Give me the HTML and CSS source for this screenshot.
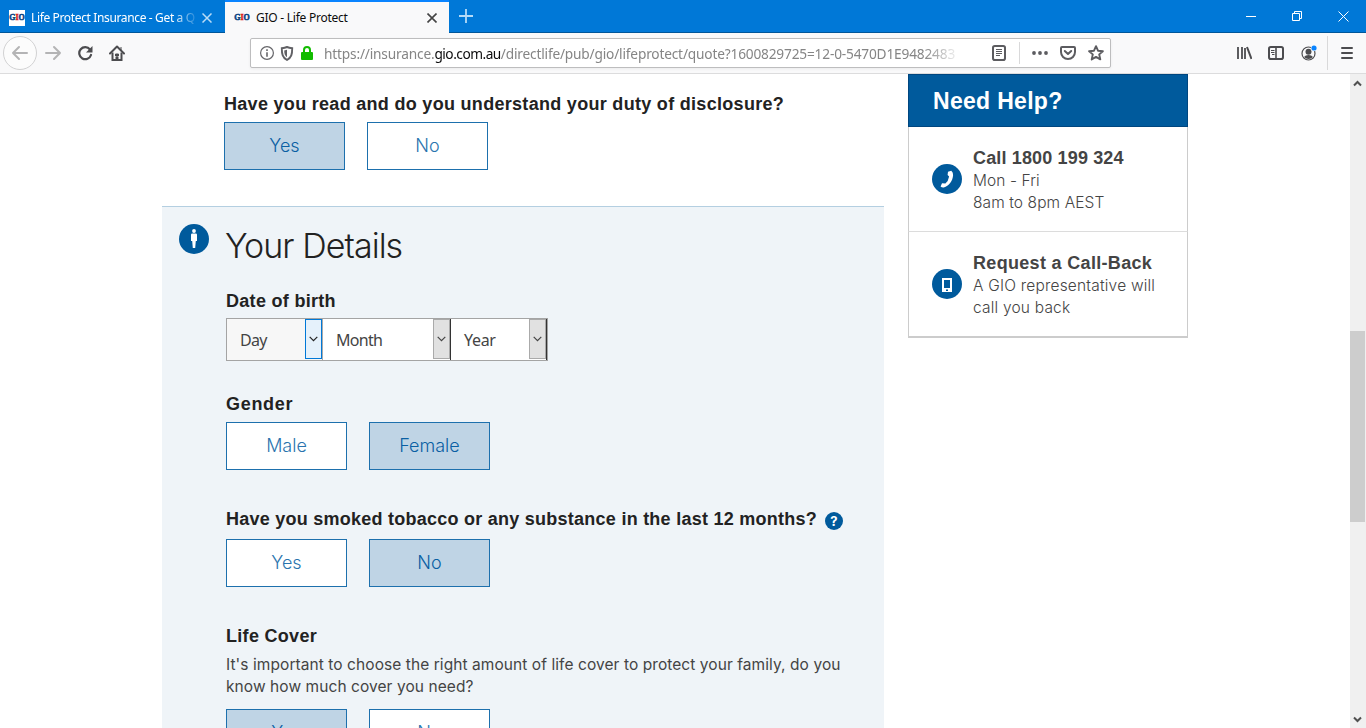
FILE: index.html
```html
<!DOCTYPE html>
<html lang="en">
<head>
<meta charset="utf-8">
<title>GIO - Life Protect</title>
<link rel="stylesheet" href="styles.css">
</head>
<body>
<div class="window">
  <header class="tabs">
    <div class="tab">
      <span class="fav"><b>G</b><b class="red">I</b><b>O</b></span>
      <span class="tab-title fade">Life Protect Insurance - Get a Q</span>
      <svg class="close" width="10" height="10" viewBox="0 0 10 10"><path d="M.5.5l9 9M9.5.5l-9 9" stroke="#b9dcf6" stroke-width="1.5"/></svg>
    </div>
    <div class="tab active">
      <span class="fav"><b>G</b><b class="red">I</b><b>O</b></span>
      <span class="tab-title">GIO - Life Protect</span>
      <svg class="close" width="10" height="10" viewBox="0 0 10 10"><path d="M.5.5l9 9M9.5.5l-9 9" stroke="#444" stroke-width="1.6"/></svg>
    </div>
    <svg class="plus" width="14" height="14" viewBox="0 0 14 14"><path d="M7 0v14M0 7h14" stroke="#b5dbf8" stroke-width="1.8"/></svg>
    <div class="controls">
      <svg width="11" height="11" viewBox="0 0 11 11"><path d="M0 5.5h10" stroke="#fff"/></svg>
      <svg width="11" height="11" viewBox="0 0 11 11" fill="none" stroke="#fff"><path d="M.5 2.5h7v7h-7zM2.500 2.500v-2h7v7h-2"/></svg>
      <svg width="11" height="11" viewBox="0 0 11 11"><path d="M.5.5l10 10M10.500.5l-10 10" stroke="#fff"/></svg>
    </div>
  </header>

  <div class="toolbar">
    <div class="nav">
      <span class="back"><svg width="18" height="16" viewBox="0 0 18 16" fill="none" stroke="#b4b4b5" stroke-width="2" stroke-linecap="round" stroke-linejoin="round"><path d="M16 8H2M8 2L2 8l6 6"/></svg></span>
      <svg class="fwd" width="18" height="16" viewBox="0 0 18 16" fill="none" stroke="#b4b4b5" stroke-width="2" stroke-linecap="round" stroke-linejoin="round"><path d="M2 8h14M10 2l6 6-6 6"/></svg>
      <svg class="reload" width="16" height="16" viewBox="0 0 16 16"><path d="M13 4.500A6 6 0 1 0 14 10" fill="none" stroke="#4c4c4f" stroke-width="2.200" stroke-linecap="round"/><path d="M15.500 1v6.500H9z" fill="#4c4c4f"/></svg>
      <svg class="home" width="16" height="16" viewBox="0 0 16 16"><path d="M1 8.500L8 1.500l7 7" fill="none" stroke="#4c4c4f" stroke-width="2" stroke-linecap="round" stroke-linejoin="round"/><path d="M3.500 7.500V15h9V7.500" fill="none" stroke="#4c4c4f" stroke-width="2"/><path d="M12 2v4M6.500 9h3v2h-3zM7 12h2v3H7z" stroke="#4c4c4f" fill="#4c4c4f"/></svg>
    </div>
    <div class="urlbar">
      <svg width="14" height="14" viewBox="0 0 14 14"><circle cx="7" cy="7" r="6.400" fill="none" stroke="#66666a" stroke-width="1.200"/><path d="M7 6.200v4.500M7 3.300v1.600" stroke="#66666a" stroke-width="1.600"/></svg>
      <svg width="14" height="15" viewBox="0 0 14 15"><path d="M7 1c2 .8 3.600 1 5.200 1.200C12.200 8 11.500 11.500 7 14 2.500 11.500 1.800 8 1.800 2.200 3.400 2 5 1.800 7 1z" fill="none" stroke="#616165" stroke-width="1.900"/><path d="M7 3.700v7.500C4.700 9.500 4.300 7.500 4.200 4.400z" fill="#616165"/></svg>
      <svg class="lock" width="12" height="14" viewBox="0 0 12 14"><path d="M3 7V4a3 3 0 0 1 6 0v3" fill="none" stroke="#12bc00" stroke-width="2"/><rect y="6" width="12" height="8" rx="1" fill="#12bc00"/></svg>
      <span class="url">https://insurance.<i>gio.com.au</i>/directlife/pub/gio/lifeprotect/quote?1600829725=12-0-5470D1E9482483</span>
      <svg class="reader" width="14" height="16" viewBox="0 0 14 16" fill="none" stroke="#5c5c60"><rect x="1" y="1" width="12" height="14" rx="1.800" stroke-width="2"/><path d="M4 4.500h6M4 6.500h6M4 8.500h6M4 10.500h4"/></svg>
      <span class="sep"></span>
      <svg class="dots" width="16" height="4" viewBox="0 0 16 4" fill="#5c5c60"><circle cx="2" cy="2" r="1.900"/><circle cx="8" cy="2" r="1.900"/><circle cx="14" cy="2" r="1.900"/></svg>
      <svg class="pocket" width="16" height="14" viewBox="0 0 16 14" fill="none" stroke="#5c5c60" stroke-width="2" stroke-linecap="round" stroke-linejoin="round"><path d="M2 1h12q1 0 1 1v4a7 7 0 0 1-14 0V2q0-1 1-1zM4.800 5L8 8l3.200-3"/></svg>
      <svg class="star" width="16" height="16" viewBox="0 0 16 16" fill="none" stroke="#5c5c60" stroke-width="1.900" stroke-linejoin="round"><path d="M8 1.200l2 4.500 4.900.5-3.700 3.200 1.100 5L8 11.900l-4.300 2.500 1.100-5L1.100 6.200 6 5.700z"/></svg>
    </div>
    <div class="tools">
      <svg width="16" height="14" viewBox="0 0 16 14" stroke="#4c4c4f" stroke-width="2"><path d="M2 1v12M6 1v12M9 2v11" stroke-width="1.800"/><path d="M11 1l4.500 12"/></svg>
      <svg width="16" height="14" viewBox="0 0 16 14" fill="none" stroke="#4c4c4f"><rect x="1" y="1" width="14" height="12" rx="1.800" stroke-width="2"/><path d="M8 1v12" stroke-width="1.600"/><path d="M3 4.500h3.500M3 6.500h3.500M4 8.500h2.500"/></svg>
      <svg class="account" width="16" height="16" viewBox="0 0 16 16"><circle cx="7.500" cy="8.500" r="6.500" fill="none" stroke="#4c4c4f" stroke-width="1.200"/><circle cx="7.500" cy="6.700" r="3" fill="#4c4c4f"/><path d="M3 12q1.500-2 4.500-2t4.500 2q-1.800 2-4.500 2T3 12z" fill="#4c4c4f"/><circle cx="13" cy="3" r="3.200" fill="#f9f9fa"/><circle cx="13" cy="3" r="2.600" fill="#0a84ff"/></svg>
      <span class="sep tall"></span>
      <svg class="burger" width="12" height="12" viewBox="0 0 12 12" stroke="#4c4c4f" stroke-width="2" stroke-linecap="round"><path d="M1 1h10M1 6h10M1 11h10"/></svg>
    </div>
  </div>

  <div class="page">
    <main class="form">
      <section class="disclosure">
        <h3>Have you read and do you understand your duty of disclosure?</h3>
        <div class="choices"><button class="choice on">Yes</button><button class="choice">No</button></div>
      </section>
      <section class="details">
        <svg class="badge" width="30" height="30" viewBox="0 0 30 30"><circle cx="15" cy="15" r="15" fill="#005a9c"/><circle cx="15" cy="7" r="1.900" fill="#fff"/><path d="M13.200 9.500h3.600q1.200 0 1.200 1.300V17h-1.200l-.6 7h-2.400l-.6-7H12v-6.200q0-1.300 1.200-1.300z" fill="#fff"/></svg>
        <div class="fields">
          <h2>Your Details</h2>
          <h3 class="dob">Date of birth</h3>
          <div class="date">
            <div class="sel day"><span>Day</span><em><svg width="9" height="6" viewBox="0 0 9 6"><path d="M.7.8l3.800 3.800L8.300.8" fill="none" stroke="#222" stroke-width="1.200"/></svg></em></div>
            <div class="sel month"><span>Month</span><em><svg width="9" height="6" viewBox="0 0 9 6"><path d="M.7.8l3.800 3.800L8.300.8" fill="none" stroke="#444" stroke-width="1.200"/></svg></em></div>
            <div class="sel year"><span>Year</span><em><svg width="9" height="6" viewBox="0 0 9 6"><path d="M.7.8l3.800 3.800L8.300.8" fill="none" stroke="#444" stroke-width="1.200"/></svg></em></div>
          </div>
          <h3 class="gender">Gender</h3>
          <div class="choices"><button class="choice">Male</button><button class="choice on">Female</button></div>
          <h3 class="smoke"><span>Have you smoked tobacco or any substance in the last 12 months?</span><span class="help">?</span></h3>
          <div class="choices"><button class="choice">Yes</button><button class="choice on">No</button></div>
          <h3 class="cover">Life Cover</h3>
          <p class="copy">It's important to choose the right amount of life cover to protect your family, do you<br>know how much cover you need?</p>
          <div class="choices"><button class="choice on">Yes</button><button class="choice">No</button></div>
        </div>
      </section>
    </main>
    <aside class="aside">
      <h2>Need Help?</h2>
      <div class="contact">
        <svg width="30" height="30" viewBox="0 0 30 30"><circle cx="15" cy="15" r="15" fill="#005a9c"/><path d="M16 7.800l3.300-1q2 1.700 1.800 4.500c-.4 5.700-4.200 10.900-9.300 12.200q-2 .2-3.200-.9l1.400-3.400 3.400.3q3-2.400 3.700-7l-1.500-1.500z" fill="#fff"/></svg>
        <div><h4>Call 1800 199 324</h4><p>Mon - Fri<br>8am to 8pm AEST</p></div>
      </div>
      <div class="contact last">
        <svg width="30" height="30" viewBox="0 0 30 30"><circle cx="15" cy="15" r="15" fill="#005a9c"/><path d="M10 9h10v14H10zM12 11v8h6v-8z" fill="#fff" fill-rule="evenodd"/><path d="M14 20.500h2V22h-2z" fill="#005a9c"/></svg>
        <div><h4 class="callback">Request a Call-Back</h4><p class="wide">A GIO representative will<br>call you back</p></div>
      </div>
    </aside>
    <div class="scroll">
      <svg width="9" height="7" viewBox="0 0 9 7"><path d="M1 5.500L4.500 2 8 5.500" fill="none" stroke="#505050" stroke-width="2"/></svg>
      <span class="thumb"></span>
      <svg class="down" width="9" height="7" viewBox="0 0 9 7"><path d="M1 1.500L4.500 5 8 1.500" fill="none" stroke="#505050" stroke-width="2"/></svg>
    </div>
  </div>
</div>
</body>
</html>
```
FILE: styles.css
```css
* { box-sizing: border-box; }
body { margin: 0; background: #fff; font-family: Inter, sans-serif; }
h2, h3, h4, p { margin: 0; white-space: nowrap; }
svg { display: block; flex: none; }
.window { width: 1366px; height: 728px; overflow: hidden; display: flex; flex-direction: column; }

.tabs { height: 33px; flex: none; background: #0078d7; border-bottom: 1px solid #00569a; display: flex; align-items: center; }
.tab { width: 225px; height: 33px; padding: 3px 13px 0 9px; display: flex; align-items: center; color: #fff; font: 12px/18px "Noto Sans", sans-serif; }
.tab.active { width: 224px; background: #f9f9fa; border-top: 2px solid #0a84ff; padding: 1px 12px 0 9px; color: #0c0c0d; }
.fav { width: 16px; height: 16px; background: #fff; display: flex; flex: none; align-items: center; justify-content: center; font: 900 8px/16px "Liberation Serif", serif; color: #07427f; -webkit-text-stroke: .5px; }
.active .fav { background: none; }
.fav .red { color: #dd2119; }
.tab-title { margin-left: 6px; width: 166px; white-space: nowrap; letter-spacing: -.25px; }
.fade { -webkit-mask-image: linear-gradient(90deg, #000 142px, transparent 168px); mask-image: linear-gradient(90deg, #000 142px, transparent 168px); letter-spacing: -.36px; }
.close { margin-left: auto; }
.plus { margin-left: 10px; }
.controls { margin-left: auto; margin-right: 17px; display: flex; gap: 35px; }

.toolbar { height: 41px; flex: none; background: #f9f9fa; border-bottom: 1px solid #dcdcdd; display: flex; align-items: center; }
.nav { width: 250px; display: flex; align-items: center; padding-left: 3px; }
.back { width: 34px; height: 34px; border: 1px solid #d2d2d3; border-radius: 50%; display: flex; align-items: center; justify-content: center; background: #fcfcfc; }
.fwd { margin-left: 7px; }
.reload { margin-left: 15px; }
.home { margin-left: 16px; }
.urlbar { width: 861px; height: 30px; background: #fff; border: 1px solid #bdbdbe; border-radius: 2px; box-shadow: 0 1px 3px rgba(0,0,0,.06); display: flex; align-items: center; gap: 6px; padding: 0 6px 0 9px; }
.lock { margin-left: 1px; }
.url { margin: 2px 0 0 5px; width: 640px; white-space: nowrap; font: 13.700px/20px "Noto Sans", sans-serif; letter-spacing: -.18px; color: #858585; -webkit-mask-image: linear-gradient(90deg, #000 600px, transparent 637px); mask-image: linear-gradient(90deg, #000 600px, transparent 637px); }
.url i { font-style: normal; color: #0c0c0d; letter-spacing: -.5px; }
.reader { margin-left: auto; }
.sep { width: 1px; height: 22px; background: #d9d9da; margin-left: 7px; }
.dots { margin-left: 6px; }
.pocket { margin-left: 6px; }
.star { margin-left: 6px; }
.tools { margin-left: auto; display: flex; align-items: center; gap: 16px; padding-right: 13px; }
.account { margin-left: 1px; }
.tall { height: 34px; margin-left: -6px; }
.burger { margin-left: -3px; }

.page { flex: 1; min-height: 0; display: flex; align-items: flex-start; padding-left: 162px; }
.form { width: 722px; }
h3 { color: #222; font: 700 18px/22px "Liberation Sans", sans-serif; letter-spacing: .3px; }
.disclosure { height: 132px; padding: 19px 0 0 62px; }
.choices { display: flex; gap: 22px; }
.disclosure .choices { margin-top: 7px; }
.choice { width: 121px; height: 48px; padding: 0 0 1px; border: 1px solid #1d70ad; background: #fff; color: #2a74ae; font: 300 18px/24px Inter, sans-serif; }
.choice.on { background: #bfd4e5; color: #0a5fa3; }
.details { background: #eff4f8; border-top: 1px solid #b4cfe1; padding: 17px 0 0 17px; height: 560px; display: flex; gap: 17px; }
.details h2 { margin-left: -1px; color: #222; font: 300 34px/44px Inter, sans-serif; letter-spacing: -.95px; }
.dob { margin-top: 22px; }
.date { width: 322px; height: 43px; margin-top: 6px; border: 1px solid #a4a4a4; background: #fff; display: flex; }
.sel { display: flex; justify-content: space-between; padding-left: 13px; color: #444; font: 16px/42px "Noto Sans", sans-serif; letter-spacing: -.7px; }
.sel em { width: 17px; height: 40px; border: 1px solid #aaa; background: #e1e1e1; display: flex; align-items: center; justify-content: center; }
.day { width: 96px; background: #f7f7f7; border-right: 1px solid #aaa; }
.day em { border-color: #0078d7; background: #e5f1fb; }
.month { width: 128px; border-right: 1px solid #333; }
.year { width: 96px; border-right: 1px solid #333; letter-spacing: -.3px; }
.gender { margin-top: 32px; letter-spacing: .7px; }
.gender + .choices { margin-top: 7px; }
.smoke { margin-top: 38px; display: flex; letter-spacing: .25px; }
.help { width: 18px; height: 18px; margin: 4px 0 0 8px; border-radius: 50%; background: #005a9c; color: #fff; font: 700 13px/18px Inter, sans-serif; letter-spacing: 0; text-align: center; }
.smoke + .choices { margin-top: 9px; }
.cover { margin-top: 38px; }
.copy { margin-top: 7px; color: #444; font-size: 15.500px; line-height: 22px; letter-spacing: .07px; }
.copy + .choices { margin-top: 11px; }

.aside { width: 280px; margin-left: 24px; }
.aside h2 { height: 53px; padding-left: 24px; background: #005a9c; border: 1px solid #00467f; color: #fff; font: 700 23px/52px "Liberation Sans", sans-serif; letter-spacing: .3px; }
.contact { height: 105px; padding: 19px 0 0 23px; border: 1px solid #ccc; border-top: 0; border-bottom-color: #dcdcdc; display: flex; gap: 11px; color: #444; }
.contact.last { height: 106px; border-bottom: 2px solid #ccc; }
.contact svg { margin-top: 18px; }
.contact h4 { font: 700 18px/24px "Liberation Sans", sans-serif; letter-spacing: .15px; }
.contact .callback { letter-spacing: .32px; }
.contact p { font-size: 15.500px; font-weight: 350; line-height: 22px; letter-spacing: .1px; }
.contact .wide { letter-spacing: .2px; }

.scroll { width: 16px; height: 654px; margin-left: auto; background: #f0f0f0; display: flex; flex-direction: column; padding: 6px 0 5px; }
.scroll svg { margin-left: 3px; }
.thumb { width: 15px; height: 191px; margin-top: 244px; background: #cdcdcd; }
.scroll .down { margin-top: auto; }
```
